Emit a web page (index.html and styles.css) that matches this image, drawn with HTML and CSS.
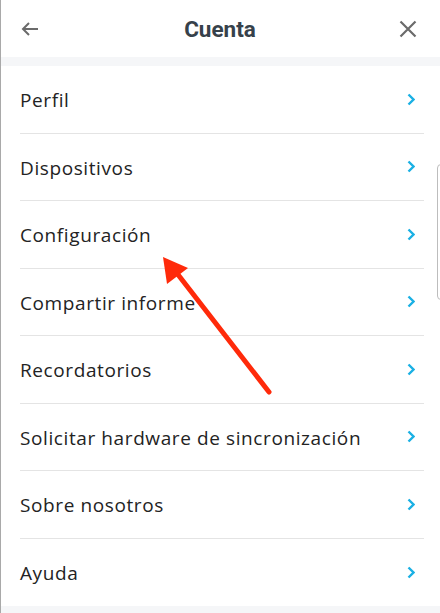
FILE: index.html
```html
<!DOCTYPE html>
<html lang="es">
<head>
<meta charset="utf-8">
<link rel="stylesheet" href="styles.css">
</head>
<body>
<div class="screen">
  <header class="topbar">
    <button class="icon-btn" aria-label="Atrás">
      <svg width="18" height="14" viewBox="0 0 18 14"><path d="M17 7H2M8 1L2 7l6 6" fill="none" stroke="#6b6b6b" stroke-width="2"/></svg>
    </button>
    <h1 class="title">Cuenta</h1>
    <button class="icon-btn" aria-label="Cerrar">
      <svg width="18" height="18" viewBox="0 0 18 18"><path d="M1.5 1.5l15 15M16.5 1.5l-15 15" fill="none" stroke="#6b6b6b" stroke-width="2.2"/></svg>
    </button>
  </header>
  <div class="band"></div>
  <ul class="menu">
    <li class="item"><span>Perfil</span><svg class="chev" width="8" height="13" viewBox="0 0 8 13"><path d="M1.5 1.5l5 5-5 5" fill="none" stroke="#1ab0e4" stroke-width="2.4"/></svg></li>
    <li class="item"><span>Dispositivos</span><svg class="chev" width="8" height="13" viewBox="0 0 8 13"><path d="M1.5 1.5l5 5-5 5" fill="none" stroke="#1ab0e4" stroke-width="2.4"/></svg></li>
    <li class="item"><span>Configuración</span><svg class="chev" width="8" height="13" viewBox="0 0 8 13"><path d="M1.5 1.5l5 5-5 5" fill="none" stroke="#1ab0e4" stroke-width="2.4"/></svg></li>
    <li class="item"><span>Compartir informe</span><svg class="chev" width="8" height="13" viewBox="0 0 8 13"><path d="M1.5 1.5l5 5-5 5" fill="none" stroke="#1ab0e4" stroke-width="2.4"/></svg></li>
    <li class="item"><span>Recordatorios</span><svg class="chev" width="8" height="13" viewBox="0 0 8 13"><path d="M1.5 1.5l5 5-5 5" fill="none" stroke="#1ab0e4" stroke-width="2.4"/></svg></li>
    <li class="item"><span>Solicitar hardware de sincronización</span><svg class="chev" width="8" height="13" viewBox="0 0 8 13"><path d="M1.5 1.5l5 5-5 5" fill="none" stroke="#1ab0e4" stroke-width="2.4"/></svg></li>
    <li class="item"><span>Sobre nosotros</span><svg class="chev" width="8" height="13" viewBox="0 0 8 13"><path d="M1.5 1.5l5 5-5 5" fill="none" stroke="#1ab0e4" stroke-width="2.4"/></svg></li>
    <li class="item"><span>Ayuda</span><svg class="chev" width="8" height="13" viewBox="0 0 8 13"><path d="M1.5 1.5l5 5-5 5" fill="none" stroke="#1ab0e4" stroke-width="2.4"/></svg></li>
  </ul>
  <div class="band bottom"></div>
  <div class="scrollbar"></div>
  <svg class="annotation" width="440" height="613" viewBox="0 0 440 613">
    <line x1="269" y1="392" x2="176" y2="272" stroke="#ff2a0a" stroke-width="5" stroke-linecap="round"/>
    <polygon points="163,257 188,268 167,284" fill="#ff2a0a"/>
  </svg>
</div>
</body>
</html>
```

FILE: styles.css
```css
html, body {
  margin: 0;
  padding: 0;
  background: #fff;
}
.screen {
  position: relative;
  width: 440px;
  height: 613px;
  box-sizing: border-box;
  border-left: 1px solid #a9a9a9;
  overflow: hidden;
  display: flex;
  flex-direction: column;
  font-family: "Open Sans", "Noto Sans", sans-serif;
}
.topbar {
  height: 57px;
  display: flex;
  align-items: center;
  justify-content: space-between;
  padding: 0 14px 0 11px;
}
.icon-btn {
  width: 36px;
  height: 36px;
  border: 0;
  background: none;
  padding: 0;
  display: flex;
  align-items: center;
  justify-content: center;
}
.title {
  margin: 0;
  font-family: Roboto, "Liberation Sans", sans-serif;
  font-weight: 700;
  font-size: 22.5px;
  color: #36414a;
  transform: translateX(1px);
}
.band {
  height: 9px;
  background: #f5f6f8;
}
.band.bottom {
  height: 7px;
  margin-top: auto;
}
.menu {
  list-style: none;
  margin: 0;
  padding: 0;
}
.item {
  height: 67.5px;
  box-sizing: border-box;
  margin-left: 19px;
  margin-right: 16px;
  padding-right: 9px;
  padding-top: 2px;
  display: flex;
  align-items: center;
  justify-content: space-between;
  border-bottom: 1.5px solid #e4e4e4;
  font-size: 19px;
  letter-spacing: 0.6px;
  color: #232323;
}
.item:last-child {
  border-bottom: 0;
}
.chev {
  flex-shrink: 0;
  margin-top: -2px;
}
.scrollbar {
  position: absolute;
  left: 436px;
  top: 164px;
  width: 8px;
  height: 136px;
  box-sizing: border-box;
  border: 1px solid #bdbdbd;
  border-radius: 4px;
  background: #fff;
}
.annotation {
  position: absolute;
  left: -1px;
  top: 0;
  pointer-events: none;
}
```
